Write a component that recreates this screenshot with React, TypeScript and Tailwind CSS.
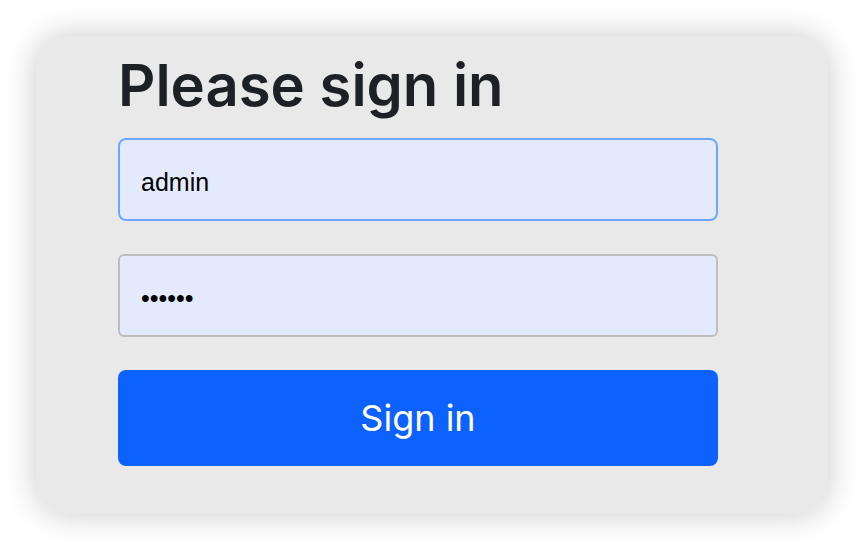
import React from "react";

export default function App() {
  return (
    <div className="w-[864px] h-[550px] bg-white overflow-hidden pt-[36px] pl-[36px]">
      <div className="w-[792px] h-[478px] rounded-[32px] bg-[#e9e9e9] shadow-[0_0_32px_rgba(0,0,0,0.22)] pl-[82px] pt-[14px]">
        <form className="w-[600px] flex flex-col" onSubmit={(e) => e.preventDefault()}>
          <h1 className="text-[58px] leading-[70px] font-semibold text-[#1d2125] font-['Inter',sans-serif]">
            Please sign in
          </h1>
          <input
            type="text"
            readOnly
            value="admin"
            className="mt-[18px] h-[83px] w-[600px] rounded-[8px] border-2 border-[#6ea8fe] bg-[#e2eafc] pl-[21px] pt-[6px] text-[25px] text-black outline-none font-['Liberation_Sans',Arial,sans-serif]"
          />
          <input
            type="password"
            readOnly
            value="123456"
            className="mt-[33px] h-[83px] w-[600px] rounded-[6px] border-2 border-[#bdbdbd] bg-[#e2eafc] pl-[21px] pt-[6px] text-[25px] text-black outline-none font-['Liberation_Sans',Arial,sans-serif]"
          />
          <button
            type="submit"
            className="mt-[33px] h-[96px] w-[600px] rounded-[8px] bg-[#0d62fe] text-white text-[36px] font-['Inter',sans-serif]"
          >
            Sign in
          </button>
        </form>
      </div>
    </div>
  );
}
